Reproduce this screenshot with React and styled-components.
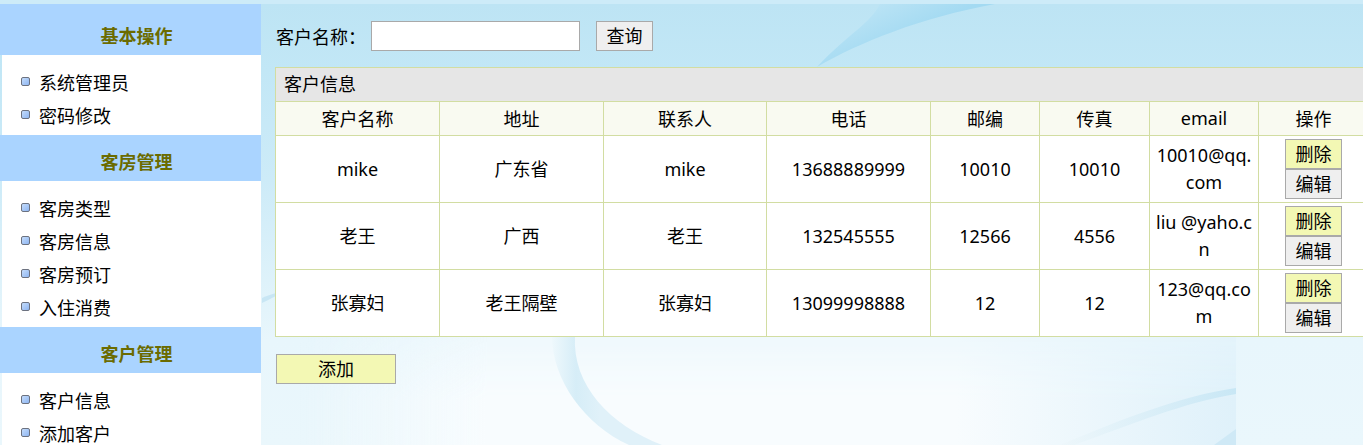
import React from "react";
import styled, { createGlobalStyle } from "styled-components";

const FONT = `"Noto Sans", "Noto Sans CJK SC", sans-serif`;

const GlobalStyle = createGlobalStyle`
html, body {
  margin: 0;
  padding: 0;
  height: 445px;
  overflow: hidden;
}
body {
  font-family: ${FONT};
  font-size: 18px;
  color: #000;
}
* { box-sizing: border-box; }
`;

const Page = styled.div`
  position: relative;
  width: 1363px;
  height: 445px;
  overflow: hidden;
  display: flex;
  align-items: flex-start;
  background: linear-gradient(180deg, #cdebf8 0, #cdebf8 4px, #bde4f4 4px, #c2e7f6 70px, #cdebf8 180px, #def2fa 280px, #e8f6fc 340px, #eaf7fc 445px);
`;

const Waves = styled.svg`
  position: absolute;
  left: 0;
  top: 0;
  width: 1363px;
  height: 445px;
`;

const Sidebar = styled.aside`
  position: relative;
  width: 261px;
  flex: none;
  margin-top: 4px;
  height: 441px;
  overflow: hidden;
`;

const MenuTitle = styled.h3`
  margin: 0;
  height: ${(p) => p.$height}px;
  padding: ${(p) => p.$top}px 0 0 12px;
  background: #aad4ff;
  color: #6b6b00;
  font-size: 18px;
  font-weight: 700;
  line-height: 24px;
  text-align: center;
`;

const MenuList = styled.ul`
  list-style: none;
  margin: 0 0 0 2px;
  padding: 10px 0 4px 0;
  background: #fff;
`;

const MenuItem = styled.li`
  display: flex;
  align-items: center;
  gap: 9px;
  height: 33px;
  padding-left: 19px;
  font-size: 18px;
`;

const Bullet = styled.i`
  display: block;
  width: 9px;
  height: 9px;
  margin-top: -1px;
  background: linear-gradient(135deg, #c4dcfb, #8fb6f2);
  border: 1px solid #6c7280;
  border-radius: 2px;
`;

const Main = styled.main`
  position: relative;
  flex: none;
  width: 1102px;
  padding: 21px 0 0 14px;
`;

const SearchBar = styled.form`
  display: flex;
  align-items: center;
  height: 30px;
  margin-bottom: 16px;
`;

const SearchLabel = styled.label`
  width: 96px;
  padding-left: 1px;
  font-size: 18px;
`;

const SearchInput = styled.input`
  width: 209px;
  height: 30px;
  padding: 0 4px;
  margin-right: 16px;
  background: #fff;
  border: 1px solid #a9a9a9;
  outline: none;
`;

const Button = styled.button`
  display: block;
  width: ${(p) => p.$width}px;
  height: 30px;
  padding: 0;
  border: 1px solid #a9a9a9;
  background: ${(p) => (p.$primary ? "#f3f8b4" : "#efefef")};
  color: #000;
  font-family: ${FONT};
  font-size: 18px;
  line-height: 28px;
  text-align: center;
`;

const Grid = styled.table`
  width: 1093px;
  table-layout: fixed;
  border-collapse: collapse;
  background: #fff;
`;

const Caption = styled.th`
  height: 34px;
  padding: 0 0 3px 8px;
  background: #e6e6e6;
  border: 1px solid #d2dda2;
  font-weight: 400;
  text-align: left;
`;

const HeadCell = styled.th`
  height: 34px;
  padding: 0 0 1px;
  background: #f9faf1;
  border: 1px solid #d2dda2;
  font-weight: 400;
  text-align: center;
`;

const Cell = styled.td`
  height: 67px;
  padding: 0 4px;
  border: 1px solid #d2dda2;
  text-align: center;
  line-height: 27px;
  word-break: break-all;
`;

const Actions = styled.div`
  display: flex;
  flex-direction: column;
  align-items: center;
`;

const AddBar = styled.div`
  margin-top: 17px;
  padding-left: 1px;
`;

const menus = [
  { title: "基本操作", height: 51, top: 20, items: ["系统管理员", "密码修改"] },
  { title: "客房管理", height: 46, top: 15, items: ["客房类型", "客房信息", "客房预订", "入住消费"] },
  { title: "客户管理", height: 46, top: 15, items: ["客户信息", "添加客户"] },
];

const columns = [
  { name: "客户名称", width: 164 },
  { name: "地址", width: 164 },
  { name: "联系人", width: 163 },
  { name: "电话", width: 164 },
  { name: "邮编", width: 109 },
  { name: "传真", width: 110 },
  { name: "email", width: 109 },
  { name: "操作", width: 110 },
];

const customers = [
  ["mike", "广东省", "mike", "13688889999", "10010", "10010", "10010@qq.com"],
  ["老王", "广西", "老王", "132545555", "12566", "4556", "liu @yaho.cn"],
  ["张寡妇", "老王隔壁", "张寡妇", "13099998888", "12", "12", "123@qq.com"],
];

export default function App() {
  return (
    <Page>
      <GlobalStyle />
      <Waves viewBox="0 0 1363 445" aria-hidden="true">
        <defs>
          <linearGradient id="swoosh" gradientUnits="userSpaceOnUse" x1="880" y1="50" x2="860" y2="8">
            <stop offset="0" stopColor="#a3daf2" />
            <stop offset="1" stopColor="#bce4f5" />
          </linearGradient>
          <linearGradient id="arc" gradientUnits="userSpaceOnUse" x1="552" y1="0" x2="600" y2="0">
            <stop offset="0" stopColor="#eef8fc" />
            <stop offset="0.5" stopColor="#d6edf7" />
            <stop offset="1" stopColor="#e0f1f9" />
          </linearGradient>
          <linearGradient id="streak" gradientUnits="userSpaceOnUse" x1="1060" y1="0" x2="1236" y2="0">
            <stop offset="0" stopColor="#eef7fb" />
            <stop offset="1" stopColor="#c8e7f5" />
          </linearGradient>
          <linearGradient id="glow" gradientUnits="userSpaceOnUse" x1="300" y1="0" x2="1236" y2="0">
            <stop offset="0" stopColor="#f8fcfe" stopOpacity="0" />
            <stop offset="0.2" stopColor="#f8fcfe" />
            <stop offset="0.7" stopColor="#f8fcfe" />
            <stop offset="1" stopColor="#dff1fa" />
          </linearGradient>
          <linearGradient id="fade" gradientUnits="userSpaceOnUse" x1="0" y1="336" x2="0" y2="400">
            <stop offset="0" stopColor="#fff" stopOpacity="0.45" />
            <stop offset="1" stopColor="#fff" stopOpacity="1" />
          </linearGradient>
          <mask id="glowMask">
            <rect x="300" y="336" width="936" height="109" fill="url(#fade)" />
          </mask>
        </defs>
        <rect x="300" y="336" width="936" height="109" fill="url(#glow)" mask="url(#glowMask)" />
        <path d="M817 67C860 42 920 18 995 4L880 4C870 24 850 32 817 67Z" fill="url(#swoosh)" />
        <path d="M552 336C552 380 585 425 629 445H662C610 425 572 385 575 336Z" fill="url(#arc)" />
        <path d="M1236 388C1180 396 1120 420 1060 445H1074C1130 425 1185 402 1236 394Z" fill="url(#streak)" />
        <path d="M1236 429L1214 445H1236Z" fill="#cfe9f6" />
        <path d="M262 298C266 296 272 294 276 293V296C270 299 266 301 262 303Z" fill="#c8e6f4" />
      </Waves>
      <Sidebar>
        {menus.map((menu) => (
          <section key={menu.title}>
            <MenuTitle $height={menu.height} $top={menu.top}>{menu.title}</MenuTitle>
            <MenuList>
              {menu.items.map((item) => (
                <MenuItem key={item}>
                  <Bullet />
                  {item}
                </MenuItem>
              ))}
            </MenuList>
          </section>
        ))}
      </Sidebar>
      <Main>
        <SearchBar>
          <SearchLabel>客户名称：</SearchLabel>
          <SearchInput type="text" />
          <Button type="button" $width={57}>查询</Button>
        </SearchBar>
        <Grid>
          <colgroup>
            {columns.map((col) => (
              <col key={col.name} style={{ width: col.width }} />
            ))}
          </colgroup>
          <thead>
            <tr>
              <Caption colSpan={8}>客户信息</Caption>
            </tr>
            <tr>
              {columns.map((col) => (
                <HeadCell key={col.name}>{col.name}</HeadCell>
              ))}
            </tr>
          </thead>
          <tbody>
            {customers.map((row) => (
              <tr key={row[0]}>
                {row.map((value, i) => (
                  <Cell key={i}>{value}</Cell>
                ))}
                <Cell>
                  <Actions>
                    <Button type="button" $width={57} $primary>删除</Button>
                    <Button type="button" $width={57}>编辑</Button>
                  </Actions>
                </Cell>
              </tr>
            ))}
          </tbody>
        </Grid>
        <AddBar>
          <Button type="button" $width={120} $primary>添加</Button>
        </AddBar>
      </Main>
    </Page>
  );
}
